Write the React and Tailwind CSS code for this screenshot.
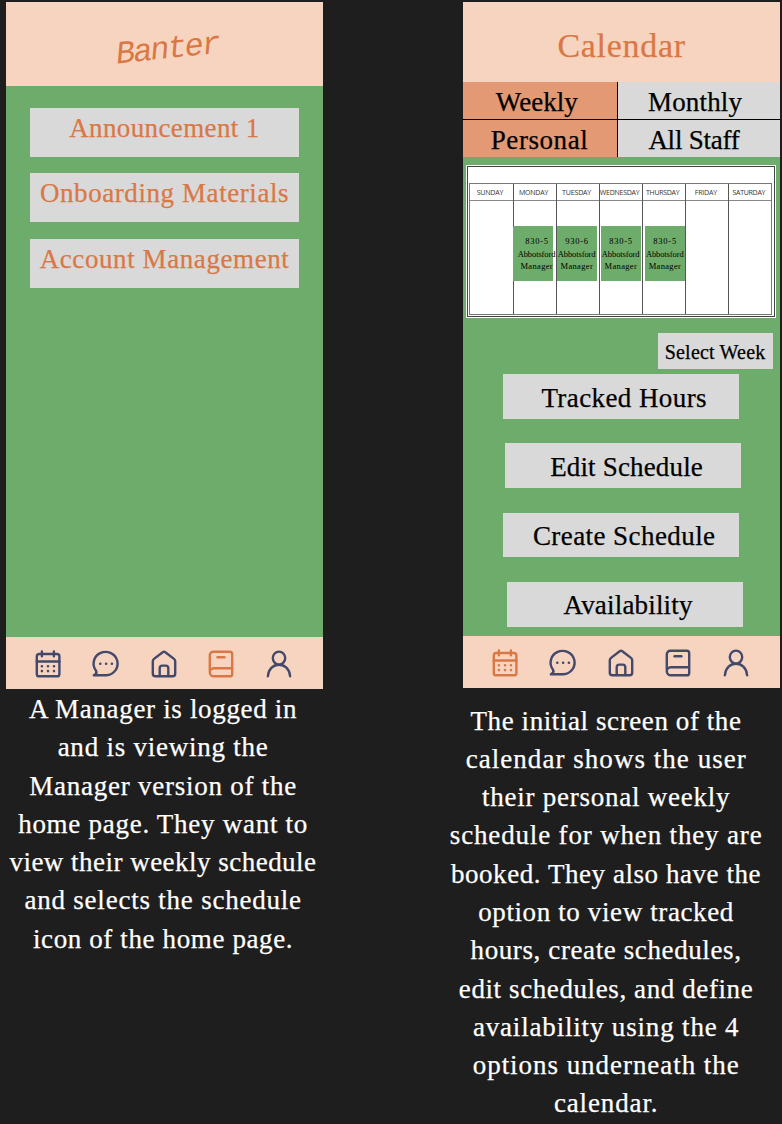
import React, { useLayoutEffect, useRef } from "react";

// A single line of text whose tracking is adjusted so it spans `w` pixels.
function Fit({ w, children, className = "" }) {
  const ref = useRef(null);
  useLayoutEffect(() => {
    const el = ref.current;
    el.style.letterSpacing = "0px";
    const natural = el.offsetWidth;
    const n = el.textContent.length;
    const gap = (w - natural) / (n - 1);
    el.style.letterSpacing = gap + "px";
    el.style.marginRight = -gap + "px";
  }, [w]);
  return (
    <span ref={ref} className={"inline-block whitespace-pre " + className}>
      {children}
    </span>
  );
}

const CalendarIcon = () => (
  <>
    <rect x="3.8" y="5" width="22.6" height="22.3" rx="2.4" />
    <path d="M3.8 12.5h22.6M8.9 2.4v4.8M20.9 2.4v4.8" />
    <path strokeWidth="2.6" d="M8.9 17.2h.01M15 17.2h.01M21 17.2h.01M8.9 22.1h.01M15 22.1h.01M21 22.1h.01" />
  </>
);
const ChatIcon = () => (
  <>
    <path d="M15.4 26.3H2.8c2.4-1.2 3.2-2.6 2.4-4.4A12 11.7 0 1 1 15.4 26.3z" />
    <path strokeWidth="2.6" d="M9.3 14.8h.01M15.1 14.8h.01M20.9 14.8h.01" />
  </>
);
const HomeIcon = () => (
  <>
    <path d="M15 2.6a1.6 1.6 0 0 1 1 .4l9 6.9a3 3 0 0 1 1.2 2.4v12.4a2.6 2.6 0 0 1-2.6 2.6H6.4a2.6 2.6 0 0 1-2.6-2.6V12.3a3 3 0 0 1 1.2-2.4L14 3a1.6 1.6 0 0 1 1-.4z" />
    <path d="M10.7 27v-7.8a2.6 2.6 0 0 1 2.6-2.6h3.4a2.6 2.6 0 0 1 2.6 2.6V27" />
  </>
);
const BookIcon = () => (
  <>
    <path d="M3.8 23.2V6.2a3.4 3.4 0 0 1 3.4-3.4h16.6a2.4 2.4 0 0 1 2.4 2.4v19.7a2.4 2.4 0 0 1-2.4 2.4H7.8a4 4 0 0 1 0-8h18.4" />
    <path d="M11.5 8.3h6.9" />
  </>
);
const UserIcon = () => (
  <>
    <ellipse cx="15" cy="9.1" rx="6.2" ry="6.5" />
    <path d="M3.9 27.3C4.3 20.3 9 15.8 15 15.8s10.7 4.5 11.1 11.5" />
  </>
);

const icons = [CalendarIcon, ChatIcon, HomeIcon, BookIcon, UserIcon];

function NavBar({ active }) {
  return (
    <nav className="flex h-[52px] gap-[27.6px] bg-[#f7d4c0] pt-[12.2px] pl-[27.9px]">
      {icons.map((Icon, i) => (
        <svg
          key={i}
          viewBox="0 0 30 30"
          fill="none"
          stroke="currentColor"
          strokeWidth="2.4"
          strokeLinecap="round"
          strokeLinejoin="round"
          className={"size-[30px] shrink-0 " + (i === active ? "text-[#d97845]" : "text-[#43496b]")}
        >
          <Icon />
        </svg>
      ))}
    </nav>
  );
}

function Caption({ lines }) {
  return (
    <p className="flex flex-col items-center text-[27px] leading-[38.3px] text-white">
      {lines.map(([text, w]) => (
        <Fit key={text} w={w}>{text}</Fit>
      ))}
    </p>
  );
}

const homeCaption = [
  ["A Manager is logged in", 267],
  ["and is viewing the", 210],
  ["Manager version of the", 267],
  ["home page. They want to", 289],
  ["view their weekly schedule", 307],
  ["and selects the schedule", 277],
  ["icon of the home page.", 260],
];

const calendarCaption = [
  ["The initial screen of the", 270],
  ["calendar shows the user", 280],
  ["their personal weekly", 247],
  ["schedule for when they are", 312],
  ["booked. They also have the", 310],
  ["option to view tracked", 255],
  ["hours, create schedules,", 270],
  ["edit schedules, and define", 294],
  ["availability using the 4", 266],
  ["options underneath the", 266],
  ["calendar.", 104],
];

const announcements = [
  ["Announcement 1", 190],
  ["Onboarding Materials", 249],
  ["Account Management", 249],
];

const days = [
  ["SUNDAY", 27],
  ["MONDAY", 29, "830-5", "-ml-[1px] pl-[8px]"],
  ["TUESDAY", 29, "930-6", "ml-0"],
  ["WEDNESDAY", 40, "830-5", "ml-[1px]"],
  ["THURSDAY", 34, "830-5", "ml-[2px]"],
  ["FRIDAY", 22],
  ["SATURDAY", 33],
];

function Shift({ hours, offset }) {
  return (
    <div className={"flex h-[54.5px] w-[40px] flex-col items-center bg-[#6dac6a] pt-[9px] text-[8.5px] leading-[12.4px] text-black " + offset}>
      <Fit w={23}>{hours}</Fit>
      <Fit w={38}>Abbotsford</Fit>
      <Fit w={32}>Manager</Fit>
    </div>
  );
}

function WeekCalendar() {
  return (
    <div className="ml-[3.5px] h-[153px] w-[310px] bg-white p-px [-webkit-text-stroke:0px]">
      <div className="h-full border border-[#444] pt-[16.4px] pr-[2px] pb-[1.5px] pl-[0.5px]">
        <div className="grid h-full grid-cols-7 border border-[#777]">
          {days.map(([day, w, hours, offset], i) => (
            <div key={day} className={i ? "border-l border-[#555]" : ""}>
              <div className="flex h-[17px] items-center justify-center border-b border-[#888] pt-px pr-[2px] font-['Open_Sans',sans-serif] text-[7px] text-[#333]">
                <Fit w={w}>{day}</Fit>
              </div>
              {hours && (
                <div className="pt-[25px]">
                  <Shift hours={hours} offset={offset} />
                </div>
              )}
            </div>
          ))}
        </div>
      </div>
    </div>
  );
}

const actions = [
  ["Tracked Hours", 165, "ml-[40.5px] pl-[6px]"],
  ["Edit Schedule", 153, "ml-[42.5px] pl-[7px]"],
  ["Create Schedule", 182, "ml-[40.5px] pl-[6px]"],
  ["Availability", 129, "ml-[44.5px] pl-[6px]"],
];

const tabs = [
  ["Weekly", 82, "h-[37px] bg-[#e39973] pr-[6px]"],
  ["Monthly", 94, "h-[37px] border-l border-black bg-[#d9d9d9] pr-[8px]"],
  ["Personal", 97, "h-[38px] border-t border-black bg-[#e39973] pr-[1px]"],
  ["All Staff", 91, "h-[38px] border-t border-l border-black bg-[#d9d9d9] pr-[10px]"],
];

export default function App() {
  return (
    <main className="flex h-[1124px] w-[782px] overflow-hidden bg-[#1e1e1e] pt-[2px] pl-[5.5px] font-['Liberation_Serif',serif] [-webkit-text-stroke:0.25px]">
      <section className="w-[317.5px] shrink-0">
        <header className="flex h-[84px] items-center justify-center bg-[#f7d4c0] pt-[12px] pl-[9px]">
          <h1 className="-rotate-6 font-['Liberation_Mono',monospace] text-[32px] text-[#d97845] italic [-webkit-text-stroke:0px]">
            <Fit w={105}>Banter</Fit>
          </h1>
        </header>
        <div className="flex h-[551px] flex-col items-center gap-[16.4px] bg-[#6dac6a] pt-[22px]">
          {announcements.map(([text, w]) => (
            <button key={text} className="flex h-[49px] w-[269px] justify-center bg-[#d9d9d9] pt-[1px] text-[27px] leading-[39px] text-[#d97845]">
              <Fit w={w}>{text}</Fit>
            </button>
          ))}
        </div>
        <NavBar active={3} />
        <div className="-ml-[3px] pt-[1px]">
          <Caption lines={homeCaption} />
        </div>
      </section>

      <section className="ml-[139.5px] w-[317.5px] shrink-0">
        <header className="flex h-[80px] items-center justify-center bg-[#f7d4c0] pt-[6px] text-[34px] text-[#d97845]">
          <h1>
            <Fit w={128}>Calendar</Fit>
          </h1>
        </header>
        <div className="grid grid-cols-[154.5px_163px]">
          {tabs.map(([text, w, style]) => (
            <button key={text} className={"flex items-center justify-center pt-[2px] text-[27px] leading-[34px] text-black " + style}>
              <Fit w={w}>{text}</Fit>
            </button>
          ))}
        </div>
        <div className="h-[479px] bg-[#6dac6a] pt-[8px]">
          <WeekCalendar />
          <button className="mt-[15px] ml-[195px] flex h-[36px] w-[115px] items-center justify-center bg-[#d9d9d9] pt-[2px] text-[20px] text-black">
            <Fit w={101}>Select Week</Fit>
          </button>
          <div className="flex flex-col gap-[24.6px] pt-[5px]">
            {actions.map(([text, w, style]) => (
              <button key={text} className={"flex h-[44.7px] w-[236px] items-center justify-center bg-[#d9d9d9] pt-[3px] text-[27px] text-black " + style}>
                <Fit w={w}>{text}</Fit>
              </button>
            ))}
          </div>
        </div>
        <NavBar active={0} />
        <div className="-ml-[31px] pt-[13.5px]">
          <Caption lines={calendarCaption} />
        </div>
      </section>
    </main>
  );
}
